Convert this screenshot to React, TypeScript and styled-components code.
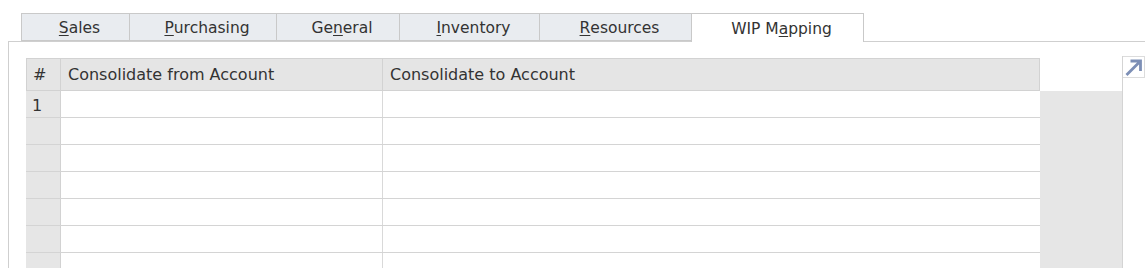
import styled, { createGlobalStyle } from "styled-components";

const GlobalStyle = createGlobalStyle`
  body {
    margin: 0;
    background: #ffffff;
    font-family: "DejaVu Sans", Verdana, sans-serif;
    color: #333333;
  }
`;

const tabs = [
  { label: "Sales", key: 0, width: 109 },
  { label: "Purchasing", key: 0, width: 148 },
  { label: "General", key: 2, width: 124 },
  { label: "Inventory", key: 0, width: 141 },
  { label: "Resources", key: 0, width: 153 },
  { label: "WIP Mapping", key: 5, width: 173, active: true },
];

const rows = ["1", "", "", "", "", "", ""];

const Accel = ({ text, at }: { text: string; at: number }) => (
  <>
    {text.slice(0, at)}
    <u>{text[at]}</u>
    {text.slice(at + 1)}
  </>
);

const App = () => {
  return (
    <Page>
      <GlobalStyle />
      <TabStrip>
        {tabs.map((t) => (
          <Tab key={t.label} $active={!!t.active} style={{ width: t.width }}>
            <Accel text={t.label} at={t.key} />
          </Tab>
        ))}
      </TabStrip>
      <Panel>
        <Table>
          <HeaderRow>
            <NumHead>#</NumHead>
            <HeadCell $w={322}>Consolidate from Account</HeadCell>
            <HeadCell $w={656} $last>
              Consolidate to Account
            </HeadCell>
          </HeaderRow>
          {rows.map((r, i) => (
            <Row key={i}>
              <NumCell>{r}</NumCell>
              <Cell $w={322} />
              <Cell $w={656} $last />
            </Row>
          ))}
        </Table>
        <Side />
        <IconCol>
          <ExpandButton>
            <svg width="19" height="19" viewBox="0 0 19 19">
              <path
                d="M2.5 17 L16 3.5 M6.5 3 H16.5 V13"
                fill="none"
                stroke="#7d8fb6"
                strokeWidth="2.8"
              />
            </svg>
          </ExpandButton>
        </IconCol>
      </Panel>
    </Page>
  );
};

const Page = styled.div`
  padding-top: 13px;
  height: 268px;
  overflow: hidden;
  box-sizing: border-box;
`;

const TabStrip = styled.div`
  display: flex;
  padding-left: 22px;
  height: 29px;
  position: relative;
  z-index: 1;
`;

const Tab = styled.div<{ $active: boolean }>`
  box-sizing: border-box;
  height: ${(p) => (p.$active ? "29px" : "28px")};
  display: flex;
  align-items: center;
  justify-content: center;
  padding-left: 8px;
  padding-top: 2px;
  font-size: 15.5px;
  color: #333333;
  background: ${(p) => (p.$active ? "#ffffff" : "#e9ecf0")};
  border: 1px solid #c9c9c9;
  border-bottom: ${(p) => (p.$active ? "none" : "1px solid #c9c9c9")};
  margin-left: -1px;

  u {
    text-decoration-thickness: 1px;
    text-underline-offset: 2px;
  }
`;

const Panel = styled.div`
  margin-left: 8px;
  margin-top: -1px;
  border-top: 1px solid #cfcfcf;
  border-left: 1px solid #cfcfcf;
  display: flex;
  align-items: stretch;
  padding: 16px 0 0 17px;
  height: 240px;
  box-sizing: border-box;
`;

const Table = styled.div`
  display: flex;
  flex-direction: column;
  width: 1014px;
`;

const HeaderRow = styled.div`
  display: flex;
  height: 33px;
  box-sizing: border-box;
  background: #e5e5e5;
  border: 1px solid #d2d2d2;
`;

const NumHead = styled.div`
  width: 34px;
  box-sizing: border-box;
  border-right: 1px solid #d2d2d2;
  padding-left: 6px;
  display: flex;
  align-items: center;
  font-size: 16px;
`;

const HeadCell = styled.div<{ $w: number; $last?: boolean }>`
  width: ${(p) => p.$w}px;
  box-sizing: border-box;
  border-right: ${(p) => (p.$last ? "none" : "1px solid #d2d2d2")};
  padding-left: 7px;
  display: flex;
  align-items: center;
  font-size: 16px;
`;

const Row = styled.div`
  display: flex;
  height: 27px;
  box-sizing: border-box;
  border-bottom: 1px solid #d4d4d4;
`;

const NumCell = styled.div`
  width: 35px;
  box-sizing: border-box;
  background: #e6e6e6;
  border-right: 1px solid #d2d2d2;
  padding: 2px 0 0 6px;
  display: flex;
  align-items: center;
  font-size: 16px;
`;

const Cell = styled.div<{ $w: number; $last?: boolean }>`
  width: ${(p) => p.$w}px;
  box-sizing: border-box;
  border-right: ${(p) => (p.$last ? "none" : "1px solid #d9d9d9")};
  background: #ffffff;
`;

const Side = styled.div`
  width: 82px;
  margin-top: 33px;
  background: #e6e6e6;
`;

const IconCol = styled.div`
  width: 22px;
  margin-top: -2px;
  border-left: 1px solid #d4d4d4;
`;

const ExpandButton = styled.div`
  width: 22px;
  height: 22px;
  box-sizing: border-box;
  border: 1px solid #dcdcdc;
  border-left: none;
  display: flex;
  align-items: center;
  justify-content: center;
`;

export default App;
